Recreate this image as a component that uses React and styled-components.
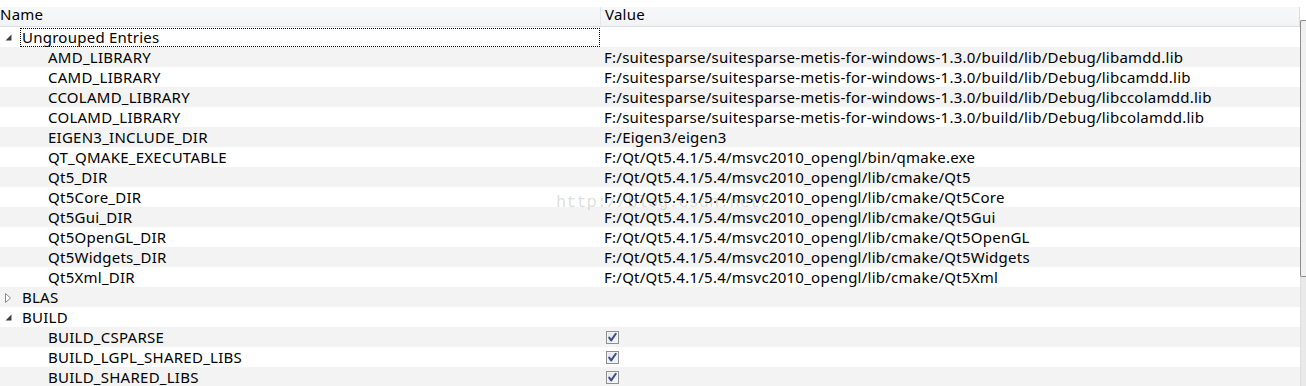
import React from 'react'
import styled, { createGlobalStyle } from 'styled-components'

const GlobalStyle = createGlobalStyle`
  html, body { margin: 0; padding: 0; background: #fff; }
  body {
    font-family: "Noto Sans", "Open Sans", "DejaVu Sans", sans-serif;
    font-size: 15px;
    letter-spacing: 0.25px;
    color: #000;
    overflow: hidden;
  }
`

const ROOT = 'F:/suitesparse/suitesparse-metis-for-windows-1.3.0/build/lib/Debug/'
const QT = 'F:/Qt/Qt5.4.1/5.4/msvc2010_opengl/'

const groups = [
  {
    name: 'Ungrouped Entries',
    open: true,
    focused: true,
    entries: [
      ['AMD_LIBRARY', ROOT + 'libamdd.lib'],
      ['CAMD_LIBRARY', ROOT + 'libcamdd.lib'],
      ['CCOLAMD_LIBRARY', ROOT + 'libccolamdd.lib'],
      ['COLAMD_LIBRARY', ROOT + 'libcolamdd.lib'],
      ['EIGEN3_INCLUDE_DIR', 'F:/Eigen3/eigen3'],
      ['QT_QMAKE_EXECUTABLE', QT + 'bin/qmake.exe'],
      ['Qt5_DIR', QT + 'lib/cmake/Qt5'],
      ['Qt5Core_DIR', QT + 'lib/cmake/Qt5Core'],
      ['Qt5Gui_DIR', QT + 'lib/cmake/Qt5Gui'],
      ['Qt5OpenGL_DIR', QT + 'lib/cmake/Qt5OpenGL'],
      ['Qt5Widgets_DIR', QT + 'lib/cmake/Qt5Widgets'],
      ['Qt5Xml_DIR', QT + 'lib/cmake/Qt5Xml']
    ]
  },
  { name: 'BLAS', open: false, entries: [] },
  {
    name: 'BUILD',
    open: true,
    entries: [
      ['BUILD_CSPARSE', true],
      ['BUILD_LGPL_SHARED_LIBS', true],
      ['BUILD_SHARED_LIBS', true]
    ]
  }
]

const Page = styled.div`
  display: flex;
  width: 1306px;
  height: 386px;
  padding-top: 7px;
  box-sizing: border-box;
  position: relative;
`

const Table = styled.div`
  width: 1300px;
  flex: none;
`

const Header = styled.div`
  display: grid;
  grid-template-columns: 600px 1fr;
  height: 19px;
  background: linear-gradient(#f7f8fa, #f1f3f5);
  border-bottom: 1px solid #dcdde0;
  border-right: 1px solid #dcdde0;
`

const HeaderCell = styled.div`
  padding-left: ${({ pad }) => pad}px;
  line-height: 15px;
  border-left: ${({ divider }) => (divider ? '1px solid #e4e6e9' : 'none')};
`

const Row = styled.div`
  display: grid;
  grid-template-columns: 600px 1fr;
  height: 20px;
  background: ${({ shaded }) => (shaded ? '#f3f3f3' : '#fff')};
`

const NameCell = styled.div`
  display: flex;
  align-items: center;
  padding-left: ${({ indent }) => indent}px;
  position: relative;
  white-space: nowrap;
  line-height: 18px;
`

const Label = styled.span`
  display: flex;
  align-items: center;
  height: 19px;
  flex: 1;
  padding-left: 2px;
  margin-left: -3px;
  outline: ${({ focused }) => (focused ? '1px dotted #000' : 'none')};
  outline-offset: -1px;
`

const ValueCell = styled.div`
  display: flex;
  align-items: center;
  padding-left: 4px;
  white-space: nowrap;
  line-height: 18px;
`

const Arrow = styled.span`
  position: absolute;
  left: 4px;
  top: 6px;
  width: 9px;
  height: 9px;
  display: flex;
`

const Check = styled.span`
  width: 13px;
  height: 13px;
  margin-left: 2px;
  box-sizing: border-box;
  border: 1px solid #8f8f8f;
  background: linear-gradient(135deg, #e0e4ea, #f6f7f9);
  box-shadow: inset 0 0 0 1px #f4f4f4;
  display: flex;
  align-items: center;
  justify-content: center;
`

const Scroll = styled.div`
  flex: 1;
  display: flex;
  flex-direction: column;
  padding-top: 13px;
`

const Thumb = styled.div`
  height: 255px;
  border-left: 1px solid #8c8c8c;
  border-top: 1px solid #8c8c8c;
  border-bottom: 1px solid #8c8c8c;
  border-radius: 2px 0 0 2px;
  background: #f0f0f0;
`

const Track = styled.div`
  flex: 1;
  border-left: 1px solid #dedede;
  background: #e9e9e9;
`

const Watermark = styled.div`
  position: absolute;
  left: 556px;
  top: 193px;
  font-family: "Liberation Mono", "DejaVu Sans Mono", monospace;
  font-size: 17px;
  letter-spacing: 0;
  color: rgba(120, 120, 120, 0.25);
  pointer-events: none;
`

const Expanded = () => (
  <svg width="9" height="9" viewBox="0 0 9 9">
    <path d="M7.5 1.5 L7.5 7.5 L1.5 7.5 Z" fill="#404040" />
  </svg>
)

const Collapsed = () => (
  <svg width="9" height="11" viewBox="0 0 9 11">
    <path d="M1.5 0.5 L6.5 5 L1.5 9.5 Z" fill="#fff" stroke="#8a8a8a" />
  </svg>
)

const Tick = () => (
  <svg width="11" height="11" viewBox="0 0 11 11">
    <path d="M2.2 5.6 L4.2 8.4 L8.8 1.8" fill="none" stroke="#3c4f86" strokeWidth="2" strokeLinecap="round" strokeLinejoin="round" />
  </svg>
)

export default function App() {
  let index = 0
  const rows = []
  groups.forEach(group => {
    rows.push(
      <Row key={group.name} shaded={index++ % 2 === 1}>
        <NameCell indent={23}>
          <Arrow>{group.open ? <Expanded /> : <Collapsed />}</Arrow>
          <Label focused={group.focused}>{group.name}</Label>
        </NameCell>
        <ValueCell />
      </Row>
    )
    if (!group.open) return
    group.entries.forEach(([name, value]) => {
      rows.push(
        <Row key={name} shaded={index++ % 2 === 1}>
          <NameCell indent={48}>{name}</NameCell>
          <ValueCell>
            {value === true ? <Check><Tick /></Check> : value}
          </ValueCell>
        </Row>
      )
    })
  })

  return (
    <>
      <GlobalStyle />
      <Page>
        <Table>
          <Header>
            <HeaderCell pad={0}>Name</HeaderCell>
            <HeaderCell pad={4} divider>Value</HeaderCell>
          </Header>
          {rows}
        </Table>
        <Scroll>
          <Thumb />
          <Track />
        </Scroll>
        <Watermark>http://blog.csdn.net/</Watermark>
      </Page>
    </>
  )
}
